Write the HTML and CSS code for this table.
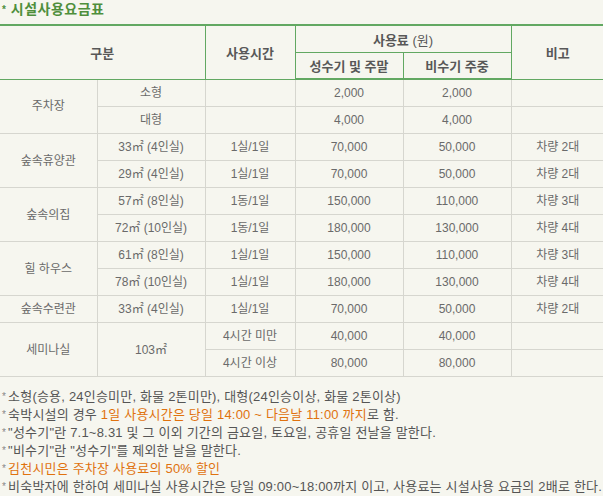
FILE: index.html
```html
<!DOCTYPE html>
<html lang="ko">
<head>
<meta charset="utf-8">
<link rel="stylesheet" href="styles.css">
</head>
<body>
<div class="page">
  <h2 class="title"><span class="mark">*</span> 시설사용요금표</h2>
  <table class="fee">
    <colgroup>
      <col class="c1"><col class="c2"><col class="c3"><col class="c4"><col class="c5"><col class="c6">
    </colgroup>
    <thead>
      <tr class="h1">
        <th colspan="2" rowspan="2" class="gl">구분</th>
        <th rowspan="2" class="gl">사용시간</th>
        <th colspan="2" class="gl">사용료 <span class="won">(원)</span></th>
        <th rowspan="2">비고</th>
      </tr>
      <tr class="h2">
        <th class="gl gt">성수기 및 주말</th>
        <th class="gl gt">비수기 주중</th>
      </tr>
    </thead>
    <tbody>
      <tr><td rowspan="2">주차장</td><td>소형</td><td></td><td>2,000</td><td>2,000</td><td></td></tr>
      <tr><td>대형</td><td></td><td>4,000</td><td>4,000</td><td></td></tr>
      <tr><td rowspan="2">숲속휴양관</td><td>33㎡ (4인실)</td><td>1실/1일</td><td>70,000</td><td>50,000</td><td>차량 2대</td></tr>
      <tr><td>29㎡ (4인실)</td><td>1실/1일</td><td>70,000</td><td>50,000</td><td>차량 2대</td></tr>
      <tr><td rowspan="2">숲속의집</td><td>57㎡ (8인실)</td><td>1동/1일</td><td>150,000</td><td>110,000</td><td>차량 3대</td></tr>
      <tr><td>72㎡ (10인실)</td><td>1동/1일</td><td>180,000</td><td>130,000</td><td>차량 4대</td></tr>
      <tr><td rowspan="2">힐 하우스</td><td>61㎡ (8인실)</td><td>1실/1일</td><td>150,000</td><td>110,000</td><td>차량 3대</td></tr>
      <tr><td>78㎡ (10인실)</td><td>1실/1일</td><td>180,000</td><td>130,000</td><td>차량 4대</td></tr>
      <tr><td>숲속수련관</td><td>33㎡ (4인실)</td><td>1실/1일</td><td>70,000</td><td>50,000</td><td>차량 2대</td></tr>
      <tr><td rowspan="2">세미나실</td><td rowspan="2">103㎡</td><td>4시간 미만</td><td>40,000</td><td>40,000</td><td></td></tr>
      <tr><td>4시간 이상</td><td>80,000</td><td>80,000</td><td></td></tr>
    </tbody>
  </table>
  <ul class="notes">
    <li>소형(승용, 24인승미만, 화물 2톤미만), 대형(24인승이상, 화물 2톤이상)</li>
    <li>숙박시설의 경우 <span class="hl">1일 사용시간은 당일 14:00 ~ 다음날 11:00 까지</span>로 함.</li>
    <li>"성수기"란 7.1~8.31 및 그 이외 기간의 금요일, 토요일, 공휴일 전날을 말한다.</li>
    <li>"비수기"란 "성수기"를 제외한 날을 말한다.</li>
    <li class="hl">김천시민은 주차장 사용료의 50% 할인</li>
    <li>비숙박자에 한하여 세미나실 사용시간은 당일 09:00~18:00까지 이고, 사용료는 시설사용 요금의 2배로 한다.</li>
  </ul>
</div>
</body>
</html>
```
FILE: styles.css
```css
html, body {
  margin: 0;
  padding: 0;
  background: #f6f6ef;
}
body {
  font-family: "Liberation Sans", "Noto Sans CJK KR", sans-serif;
  color: #666;
  font-size: 12px;
}
.page {
  width: 603px;
  padding-top: 1px;
}
.title {
  margin: 0 0 0 2px;
  font-size: 14px;
  line-height: 17px;
  font-weight: bold;
  color: #4f8f3c;
  height: 23px;
  letter-spacing: 0.5px;
}
.title .mark {
  font-size: 10px;
  vertical-align: top;
  color: #4f8f3c;
}
.fee {
  border-collapse: collapse;
  table-layout: fixed;
  width: 604px;
  margin-left: 0;
  border-top: 2px solid #62a862;
}
.c1 { width: 97px; }
.c2 { width: 108px; }
.c3 { width: 90px; }
.c4 { width: 108px; }
.c5 { width: 108px; }
.c6 { width: 93px; }
.fee th {
  font-weight: bold;
  color: #585858;
  font-size: 13px;
  padding: 0;
  text-align: center;
  border-bottom: 1px solid #62a862;
}
.fee th.gl { border-right: 1px solid #62a862; }
.fee .h1 th { height: 26px; }
.fee .h2 th { height: 25px; border-bottom: 2px solid #62a862; }
.fee .won { font-weight: normal; }
.fee td {
  height: 26px;
  padding: 0;
  text-align: center;
  color: #6a6a6a;
  border-bottom: 1px solid #d6d6cf;
  border-right: 1px solid #d6d6cf;
  line-height: 14px;
}
.fee td:last-child { border-right: none; }
.notes {
  list-style: none;
  margin: 11px 0 0 0;
  padding: 0 0 0 2px;
  color: #555;
  font-size: 13px;
  line-height: 18px;
  letter-spacing: 0.2px;
  white-space: nowrap;
}
.notes li::before {
  content: "*";
  font-size: 10px;
  color: #888;
  margin-right: 2px;
  vertical-align: 1px;
}
.notes .hl, .notes li.hl {
  color: #e0720e;
}
```
